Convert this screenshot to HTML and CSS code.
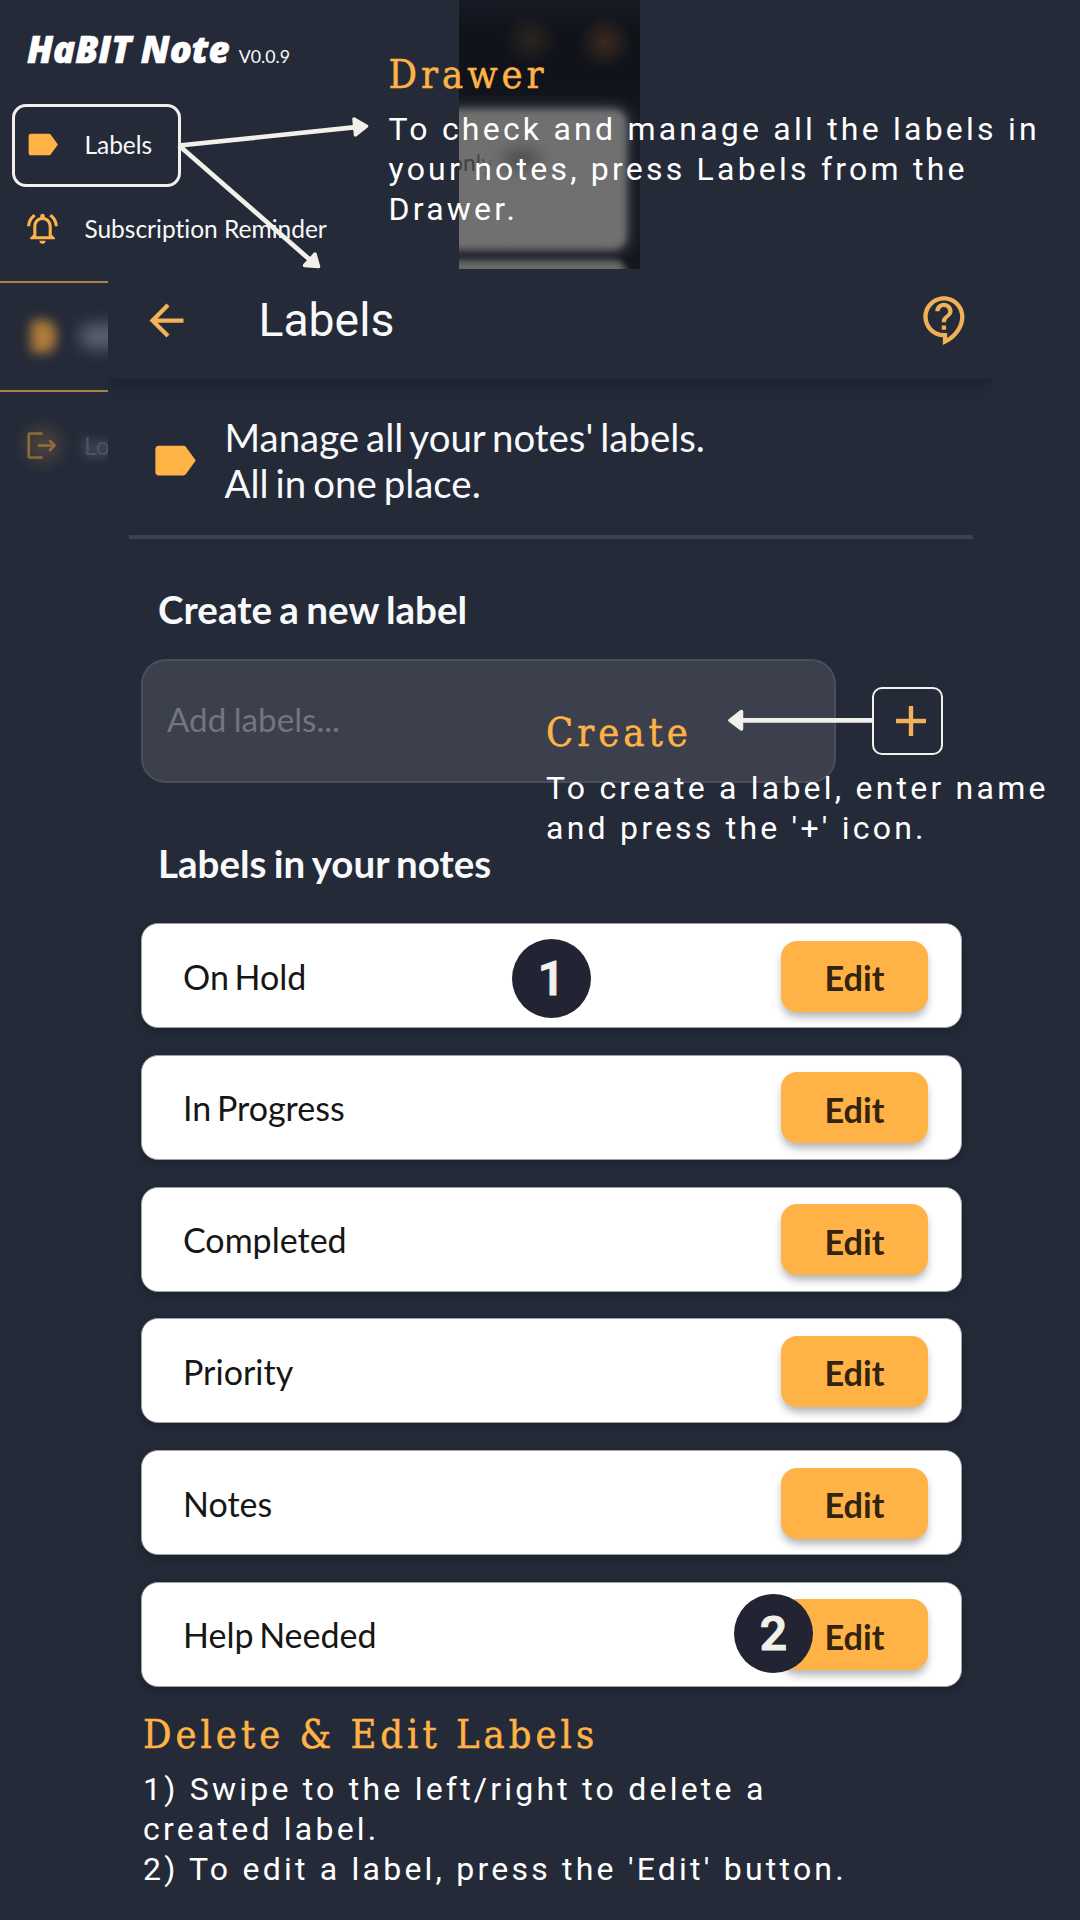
FILE: index.html
```html
<!DOCTYPE html>
<html lang="en">
<head>
<meta charset="utf-8">
<title>HaBIT Note – Labels</title>
<link rel="stylesheet" href="styles.css">
</head>
<body>
<svg class="defs" aria-hidden="true">
  <symbol id="label" viewBox="0 0 24 24"><path d="M17.3 5.5C17 5.1 16.6 5 16 5H4.500C3.600 5 3 5.600 3 6.500v11c0 .9.600 1.500 1.500 1.500H16c.6 0 1-.1 1.300-.5L22 12z"/></symbol>
  <symbol id="logout" viewBox="0 0 24 24"><path d="M17 8l-1.200 1.200 2 2H9v1.600h8.800l-2 2L17 16l4-4-4-4zM4 5h8V3.400H3.500C2.700 3.400 2.200 3.900 2.200 4.700v14.600c0 .8.500 1.300 1.300 1.300H12V19H4V5z"/></symbol>
</svg>

<main class="guide">
  <section class="drawer">
    <header class="brand">
      <h1 class="brand-name">HaBIT Note</h1>
      <span class="brand-version">V0.0.9</span>
    </header>
    <nav class="menu">
      <a class="menu-item menu-item-active"><svg class="icon-menu"><use href="#label"/></svg>Labels</a>
      <a class="menu-item"><svg class="icon-menu" viewBox="0 0 24 24"><path d="M12 22c1.100 0 2-.9 2-2h-4c0 1.100.9 2 2 2zm6-6v-5c0-3.070-1.630-5.640-4.500-6.320V4c0-.83-.67-1.500-1.500-1.500s-1.500.67-1.500 1.500v.68C7.640 5.360 6 7.920 6 11v5l-2 2v1h16v-1l-2-2zm-2 1H8v-6c0-2.480 1.510-4.500 4-4.500s4 2.020 4 4.500v6zM7.580 4.080L6.150 2.650C3.750 4.480 2.170 7.300 2.030 10.500h2c.15-2.650 1.510-4.970 3.550-6.420zm12.390 6.420h2c-.15-3.200-1.730-6.020-4.120-7.850l-1.420 1.430c2.020 1.450 3.390 3.770 3.540 6.420z"/></svg>Subscription Reminder</a>
    </nav>
    <div class="backdrop">
      <i class="glow glow-one"></i><i class="glow glow-two"></i>
      <i class="note-card"></i><i class="note-card note-card-next"></i>
      <i class="smudge"></i>
      <span class="note-text">only</span>
    </div>
  </section>

  <aside class="drawer-rest">
    <div class="rest-row rest-row-lined"><i class="icon-blur"></i><i class="text-blur"></i></div>
    <div class="rest-row rest-row-logout"><i class="logout-glow"></i><svg class="icon-menu icon-dim"><use href="#logout"/></svg><span class="rest-text">Lo</span></div>
  </aside>

  <section class="screen">
    <header class="app-bar">
      <svg class="icon-back" viewBox="0 0 24 24"><path d="M20 11H7.830l5.590-5.590L12 4l-8 8 8 8 1.410-1.410L7.830 13H20v-2z"/></svg>
      <h2 class="app-title">Labels</h2>
      <svg class="icon-help" viewBox="0 0 24 24"><path d="M11 23.590v-3.600c-5.010-.26-9-4.420-9-9.490C2 5.260 6.260 1 11.500 1S21 5.260 21 10.500c0 4.950-3.440 9.930-8.570 12.400l-1.430.69zM11.500 3C7.360 3 4 6.360 4 10.500S7.360 18 11.500 18H13v2.300c3.640-2.300 6-6.080 6-9.800C19 6.360 15.640 3 11.500 3zm-1 11.500h2v2h-2zm2-1.500h-2c0-3.250 3-3 3-5 0-1.100-.9-2-2-2s-2 .9-2 2h-2c0-2.210 1.790-4 4-4s4 1.790 4 4c0 2.500-3 2.750-3 5z"/></svg>
    </header>
    <div class="intro">
      <svg class="icon-intro"><use href="#label"/></svg>
      <p class="intro-text">Manage all your notes' labels.<br>All in one place.</p>
    </div>
    <hr class="divider">
    <h3 class="section-title">Create a new label</h3>
    <div class="create-row">
      <div class="label-input">Add labels...</div>
      <button class="add-button"><svg class="icon-add" viewBox="0 0 30 30"><path d="M12.800 0h4.400v12.800H30v4.400H17.200V30h-4.400V17.200H0v-4.400h12.800z"/></svg></button>
    </div>
    <h3 class="section-title section-title-list">Labels in your notes</h3>
    <ul class="label-list">
      <li class="label-row">On Hold<button class="edit-button">Edit</button></li>
      <li class="label-row">In Progress<button class="edit-button">Edit</button></li>
      <li class="label-row">Completed<button class="edit-button">Edit</button></li>
      <li class="label-row">Priority<button class="edit-button">Edit</button></li>
      <li class="label-row">Notes<button class="edit-button">Edit</button></li>
      <li class="label-row">Help Needed<button class="edit-button">Edit</button></li>
    </ul>
  </section>

  <svg class="arrows" viewBox="0 0 1080 1920">
    <g class="arrow-lines"><path d="M179 145.500L356 127.200M179 145.500L309 259M872 720.300H740"/></g>
    <g class="arrow-heads"><path d="M354 119l12.500 7.200L355.500 135zM315 254l3.500 12.500-14-1zM741.500 711.500v17.500l-11.500-8.700z"/></g>
  </svg>

  <span class="step step-one">1</span>
  <span class="step step-two">2</span>

  <article class="note note-drawer">
    <h4 class="note-title">Drawer</h4>
    <p class="note-body">To check and manage all the labels in<br>your notes, press Labels from the<br>Drawer.</p>
  </article>
  <article class="note note-create">
    <h4 class="note-title">Create</h4>
    <p class="note-body">To create a label, enter name<br>and press the '+' icon.</p>
  </article>
  <article class="note note-edit">
    <h4 class="note-title">Delete &amp; Edit Labels</h4>
    <p class="note-body">1) Swipe to the left/right to delete a<br>created label.<br>2) To edit a label, press the 'Edit' button.</p>
  </article>
</main>
</body>
</html>
```

FILE: styles.css
```css
:root {
  --bg: #242a38;
  --amber: #ffb347;
  --ivory: #f2f0eb;
}

* { box-sizing: border-box; }

body {
  margin: 0;
  background: var(--bg);
  color: #f8f9fb;
  font-family: Lato, sans-serif;
  font-variant-ligatures: none;
}

h1, h2, h3, h4, p, ul { margin: 0; padding: 0; font-weight: 400; }
button { border: 0; padding: 0; font: inherit; }
svg { display: block; flex: none; fill: var(--amber); }
.defs { position: absolute; width: 0; height: 0; }

.guide {
  position: relative;
  width: 1080px;
  height: 1920px;
  overflow: hidden;
  display: grid;
  grid-template: 269px 1fr / 108px 885px;
}

/* Drawer */
.drawer { grid-column: 1 / 3; position: relative; padding: 28px 0 0 12px; }
.brand { display: flex; align-items: baseline; gap: 9px; padding-left: 15px; line-height: 40px; height: 40px; }
.brand-name { font: italic 800 36.5px/42px "Open Sans", sans-serif; color: #fff; -webkit-text-stroke: .6px #fff; }
.brand-version { font-size: 17.800px; }
.menu { display: flex; flex-direction: column; align-items: flex-start; margin-top: 36px; }
.menu-item {
  display: flex;
  align-items: center;
  gap: 23.900px;
  height: 82px;
  padding-left: 11.500px;
  font-size: 24.500px;
}
.menu-item-active {
  width: 169px;
  height: 83px;
  padding: 0 0 3px 8.500px;
  border: 3px solid var(--ivory);
  border-radius: 14px;
}
.icon-menu { width: 37px; height: 37px; }

/* Dimmed screen behind the drawer */
.backdrop {
  position: absolute;
  left: 459px;
  top: 0;
  width: 181px;
  height: 268.500px;
  overflow: hidden;
  background: linear-gradient(#161a24, #10131a 30px 85px, #161922 120px, #14171e);
}
.backdrop > * { position: absolute; }
.glow { width: 56px; height: 56px; border-radius: 50%; background: radial-gradient(circle, #2a241f, transparent 70%); }
.glow-one { left: 44px; top: 11px; }
.glow-two { left: 118px; top: 14px; background: radial-gradient(circle, #3a291f, transparent 70%); }
.note-card { left: -20px; top: 110px; width: 187px; height: 139px; border-radius: 12px; background: #707070; box-shadow: 0 0 14px #707173; filter: blur(3px); }
.note-card-next { top: 260px; height: 40px; box-shadow: none; background: #686a69; }
.smudge { left: 42px; top: 149px; width: 40px; height: 20px; border-radius: 50%; background: #4c4c4e; filter: blur(8px); }
.note-text { left: -9px; top: 148px; font-size: 23px; line-height: 28px; color: #3e4043; filter: blur(.7px); mask-image: linear-gradient(90deg, #000 60%, transparent 105%); }

.drawer-rest { position: relative; overflow: hidden; padding-top: 12px; }
.rest-row { position: relative; display: flex; align-items: center; gap: 23px; padding-left: 24px; }
.rest-row-lined { gap: 24px; padding-left: 31px; border: solid #a98248; border-width: 2px 0; height: 111px; }
.rest-row-logout { height: 107px; }
.icon-blur { flex: none; width: 25px; height: 33px; border-radius: 4px 12px 12px 4px; background: #b17d3a; filter: blur(6px); }
.text-blur { flex: none; width: 70px; height: 25px; border-radius: 10px; background: #5b606d; filter: blur(8px); }
.icon-dim { opacity: .42; }
.logout-glow { position: absolute; left: 14px; top: 24px; width: 58px; height: 58px; background: radial-gradient(circle, #ffb34730, transparent 70%); }
.rest-text { font-size: 24.400px; color: #4e535e; text-shadow: 0 0 12px #8a909c; }

/* Labels screen */
.app-bar {
  position: relative;
  display: flex;
  align-items: center;
  height: 110px;
  padding: 0 22.500px 8px 33px;
  box-shadow: 0 1px 0 #1d222f, 0 5px 14px -2px #14182299;
  clip-path: inset(0 0 -20px 0);
}
.icon-back { width: 51px; height: 51px; fill: #f3b35a; }
.app-title { flex: 1; margin-left: 66.500px; font: 400 46.300px/54px Roboto, sans-serif; }
.icon-help { width: 52px; height: 52px; fill: #f0b056; }

.intro { display: flex; align-items: center; gap: 24.500px; padding: 36px 0 29px 41px; }
.icon-intro { width: 51px; height: 51px; }
.intro-text { font-size: 38.400px; line-height: 45.500px; word-spacing: -2.800px; }
.divider { width: 844px; height: 4px; margin: 0 0 0 21px; border: 0; background: #3c424f; }
.section-title { margin: 47px 0 26.500px 50px; font-size: 38.600px; font-weight: 700; line-height: 46px; word-spacing: -2px; }
.section-title-list { margin: 57.500px 0 37px 50px; font-size: 38.500px; }

.create-row { display: flex; align-items: center; gap: 36px; padding-left: 33px; }
.label-input {
  width: 695px;
  height: 124px;
  padding-left: 24px;
  border: 2px solid #4a4e5b;
  border-radius: 25px;
  background: #3b404c;
  color: #73767c;
  font-size: 33.200px;
  line-height: 116px;
  word-spacing: -1px;
}
.add-button {
  display: grid;
  place-items: center;
  width: 71px;
  height: 68px;
  padding-left: 7px;
  border: 2px solid var(--ivory);
  border-radius: 10px;
  background: none;
}
.icon-add { width: 30px; height: 30px; fill: #f3b157; }

.label-list { display: flex; flex-direction: column; gap: 26.800px; padding-left: 33px; list-style: none; }
.label-row {
  display: flex;
  align-items: center;
  justify-content: space-between;
  width: 821px;
  height: 105px;
  padding: 1px 33px 0 41px;
  border: 1px solid #a0a2a8;
  border-radius: 17px;
  background: #fff;
  box-shadow: 0 3px 8px #161a2499;
  color: #161616;
  font-size: 34px;
  word-spacing: -3px;
}
.edit-button {
  width: 147px;
  height: 71px;
  padding-top: 3px;
  border-radius: 16px;
  background: var(--amber);
  box-shadow: 0 6px 9px -1px #0000004d;
  color: #33230f;
  font-size: 34.300px;
  font-weight: 700;
}

/* Annotations */
.arrows { position: absolute; inset: 0; }
.arrow-lines { stroke: var(--ivory); stroke-width: 4.700; }
.arrow-heads { fill: var(--ivory); stroke: var(--ivory); stroke-width: 3.500; stroke-linejoin: round; }

.step {
  position: absolute;
  width: 79px;
  height: 79px;
  border-radius: 50%;
  background: #222433;
  color: var(--ivory);
  font: 500 48px/80px Roboto, sans-serif;
  text-align: center;
  -webkit-text-stroke: 1.200px var(--ivory);
}
.step-one { left: 512px; top: 938.500px; }
.step-two { left: 734px; top: 1593.500px; }

.note { position: absolute; display: flex; flex-direction: column; gap: 12px; white-space: nowrap; }
.note-title { color: var(--amber); font: 400 39.500px/46px "DejaVu Serif Condensed", "DejaVu Serif", serif; letter-spacing: 4px; -webkit-text-stroke: .5px var(--amber); }
.note-body { color: #fff; font: 400 32px/40px Roboto, sans-serif; letter-spacing: 3.220px; }
.note-drawer { left: 388.500px; top: 51px; }
.note-create { left: 546px; top: 708.500px; gap: 13px; }
.note-edit { left: 143px; top: 1710.500px; }
```
